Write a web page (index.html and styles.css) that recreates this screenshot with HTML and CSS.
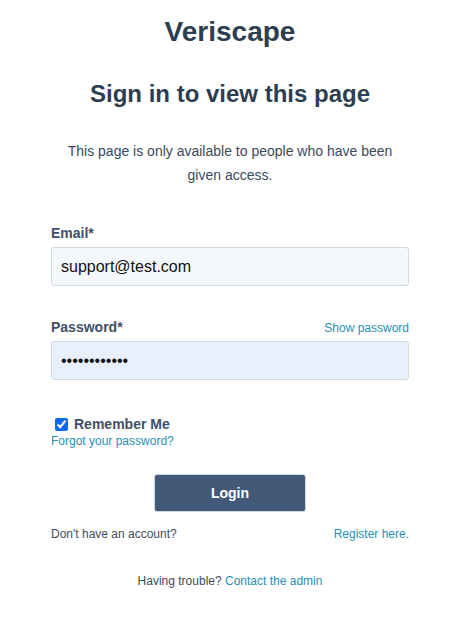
FILE: index.html
```html
<!DOCTYPE html>
<html lang="en">
<head>
<meta charset="utf-8">
<title>Veriscape – Sign in</title>
<link rel="stylesheet" href="styles.css">
</head>
<body>
<main class="page">
  <h1 class="brand">Veriscape</h1>
  <h2 class="title">Sign in to view this page</h2>
  <p class="intro">This page is only available to people who have been given access.</p>
  <form class="form">
    <div class="field">
      <div class="label-row"><label class="label" for="email">Email*</label></div>
      <input class="input" id="email" type="text" value="support@test.com">
    </div>
    <div class="field">
      <div class="label-row">
        <label class="label" for="pw">Password*</label>
        <a class="link small" href="#">Show password</a>
      </div>
      <input class="input input-fill" id="pw" type="password" value="............">
    </div>
    <div class="remember">
      <label class="check-row"><input class="check" type="checkbox" checked><span class="check-label">Remember Me</span></label>
      <a class="link small forgot" href="#">Forgot your password?</a>
    </div>
    <div class="actions"><button class="btn" type="button">Login</button></div>
    <div class="register-row">
      <span class="muted">Don't have an account?</span>
      <a class="link small" href="#">Register here.</a>
    </div>
    <p class="trouble"><span class="muted">Having trouble?</span> <a class="link" href="#">Contact the admin</a></p>
  </form>
</main>
</body>
</html>
```
FILE: styles.css
```css
html, body {
  margin: 0;
  padding: 0;
  background: #ffffff;
}
body {
  font-family: "Liberation Sans", Arial, sans-serif;
  color: #2d3e50;
}
.page {
  padding: 14px 60px 0 51px;
  display: flex;
  flex-direction: column;
}
.brand {
  margin: 0;
  text-align: center;
  font-size: 28px;
  line-height: 36px;
  font-weight: 700;
  color: #2d3e50;
}
.title {
  margin: 28px 0 0;
  text-align: center;
  font-size: 24px;
  line-height: 32px;
  font-weight: 700;
  color: #2d3e50;
}
.intro {
  margin: 29px 0 0;
  text-align: center;
  font-size: 14px;
  line-height: 24px;
  color: #3a4a5c;
}
.form {
  margin-top: 36px;
  display: flex;
  flex-direction: column;
}
.field {
  display: flex;
  flex-direction: column;
  margin-bottom: 31px;
}
.label-row {
  display: flex;
  justify-content: space-between;
  align-items: baseline;
  margin-bottom: 4px;
  height: 20px;
  line-height: 20px;
}
.label {
  font-size: 14px;
  font-weight: 700;
  color: #3d5068;
}
.link {
  color: #2a8fb3;
  text-decoration: none;
}
.small {
  font-size: 12px;
}
.input {
  box-sizing: border-box;
  height: 39px;
  width: 100%;
  margin: 0;
  padding: 0 9px;
  border: 1px solid #cfd8e3;
  border-radius: 3px;
  background: #f4f7fb;
  font-family: "Liberation Sans", Arial, sans-serif;
  font-size: 16px;
  color: #111;
  outline: none;
}
.input-fill {
  background: #e8f0fe;
}
.remember {
  margin-top: 3px;
  display: flex;
  flex-direction: column;
  align-items: flex-start;
}
.check-row {
  display: flex;
  align-items: center;
  height: 20px;
}
.check {
  margin: 0 6px 0 4px;
  width: 13px;
  height: 13px;
  accent-color: #0b6bf0;
}
.check-label {
  font-size: 14px;
  font-weight: 700;
  color: #3d5068;
}
.forgot {
  line-height: 14px;
}
.actions {
  margin-top: 26px;
  display: flex;
  justify-content: center;
}
.btn {
  width: 152px;
  height: 38px;
  border: 1px solid #d0d7df;
  border-radius: 3px;
  background: #425a78;
  color: #ffffff;
  font-family: "Liberation Sans", Arial, sans-serif;
  font-size: 14px;
  font-weight: 700;
}
.register-row {
  margin-top: 14px;
  display: flex;
  justify-content: space-between;
  line-height: 16px;
}
.muted {
  font-size: 12px;
  color: #3d4b5c;
}
.trouble {
  margin: 31px 0 0;
  text-align: center;
  font-size: 12px;
  line-height: 16px;
}
```
